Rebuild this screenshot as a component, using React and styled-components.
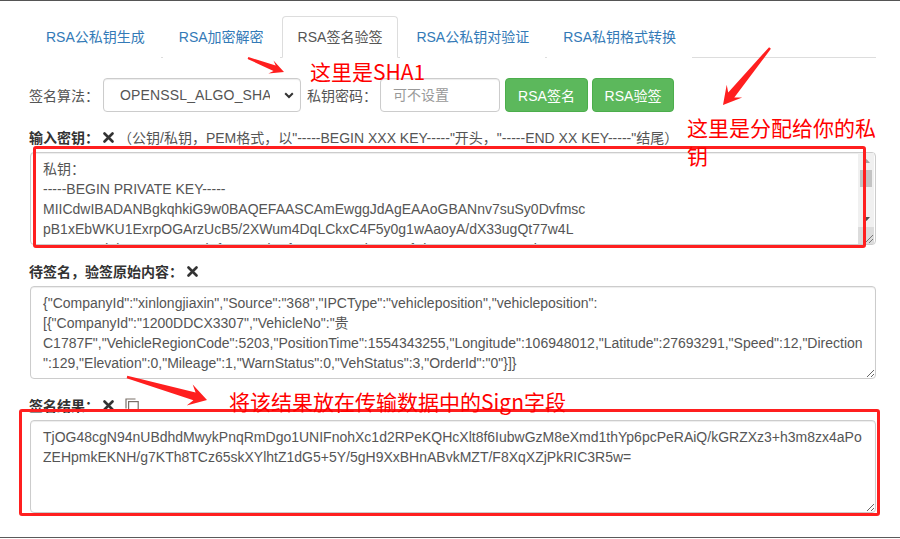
import React from "react";
import styled, { createGlobalStyle } from "styled-components";

const Global = createGlobalStyle`
  html, body { margin: 0; padding: 0; background: #fff; }
  body { font-family: "Liberation Sans", "Noto Sans CJK SC", Arial, sans-serif; font-size: 14px; color: #333; }
  * { box-sizing: border-box; }
`;

const Page = styled.div`
  position: relative;
  width: 900px;
  height: 538px;
  border-top: 1px solid #555;
  border-bottom: 1px solid #5a5a5a;
  overflow: hidden;
`;

const Container = styled.div`
  width: 846px;
  margin-left: 30px;
  padding-top: 15px;
`;

const Tabs = styled.ul`
  display: flex;
  list-style: none;
  margin: 0;
  padding: 0;
  border-bottom: 1px solid #ddd;
`;

const TabItem = styled.li`
  margin-bottom: -1px;
`;

const TabLink = styled.a`
  display: block;
  padding: 10px 15px;
  margin-right: 2px;
  line-height: 20px;
  font-size: 14px;
  text-decoration: none;
  border: 1px solid ${(p) => (p.$active ? "#ddd" : "transparent")};
  border-bottom-color: ${(p) => (p.$active ? "#fff" : "transparent")};
  border-radius: 4px 4px 0 0;
  background: #fff;
  color: ${(p) => (p.$active ? "#555" : "#337ab7")};
  cursor: pointer;
`;

const ToolRow = styled.div`
  display: flex;
  align-items: center;
  margin-top: 20px;
  margin-bottom: 15px;
  margin-left: -1px;
`;

const InlineLabel = styled.span`
  color: #555;
  font-size: 14px;
  margin-right: ${(p) => p.$mr || 4}px;
`;

const SelectBox = styled.div`
  display: flex;
  align-items: center;
  width: 198px;
  height: 34px;
  border: 1px solid #ccc;
  border-radius: 4px;
  padding: 0 6px 0 16px;
  margin-right: 6px;
  color: #555;
  font-size: 14px;
  box-shadow: inset 0 1px 1px rgba(0, 0, 0, 0.075);
`;

const SelectText = styled.span`
  flex: 1;
  overflow: hidden;
  white-space: nowrap;
  letter-spacing: 0.15px;
`;

const Chevron = styled.svg`
  flex: none;
  margin-left: 14px;
`;

const TextInput = styled.input`
  width: 120px;
  height: 34px;
  border: 1px solid #ccc;
  border-radius: 4px;
  padding: 6px 12px;
  margin-right: 5px;
  font-family: inherit;
  font-size: 14px;
  color: #555;
  box-shadow: inset 0 1px 1px rgba(0, 0, 0, 0.075);
  &::placeholder { color: #999; }
`;

const GreenButton = styled.button`
  width: ${(p) => p.$w}px;
  height: 34px;
  margin-right: 4px;
  border: 1px solid #4cae4c;
  border-radius: 4px;
  background: #5cb85c;
  color: #fff;
  font-family: inherit;
  font-size: 14px;
  padding: 0;
`;

const FormGroup = styled.div`
  margin-bottom: 16px;
`;

const FieldLabel = styled.div`
  display: flex;
  align-items: center;
  height: 20px;
  margin-bottom: 5px;
  margin-left: -1px;
  font-weight: bold;
  color: #333;
  font-size: 14px;
  white-space: nowrap;
`;

const Hint = styled.span`
  font-weight: normal;
  color: #555;
  margin-left: 4px;
`;

const IconX = styled.svg`
  margin-left: 4px;
  flex: none;
`;

const CopyIcon = styled.svg`
  margin-left: 11px;
  flex: none;
`;

const FieldWrap = styled.div`
  position: relative;
`;

const Area = styled.textarea`
  display: block;
  width: 100%;
  height: 93px;
  padding: 6px ${(p) => (p.$scroll ? 28 : 12)}px 6px 12px;
  border: 1px solid #ccc;
  border-radius: 4px;
  font-family: "Liberation Sans", "Noto Sans CJK SC", Arial, sans-serif;
  font-size: 14px;
  line-height: 20px;
  color: #555;
  white-space: pre;
  overflow: hidden;
  box-shadow: inset 0 1px 1px rgba(0, 0, 0, 0.075);
  resize: vertical;
  outline: none;
`;

/* drawn scrollbar that lies over the key textarea (headless hides native ones) */
const ScrollRail = styled.div`
  position: absolute;
  top: 1px;
  right: 2px;
  bottom: 1px;
  width: 16px;
  display: flex;
  flex-direction: column;
  pointer-events: none;
`;

const RailButton = styled.div`
  height: 16px;
  flex: none;
  display: flex;
  align-items: center;
  justify-content: center;
  background: #f0f0f0;
`;

const RailTrack = styled.div`
  flex: 1;
  background: #f0f0f0;
  padding: 1px 2px 0;
`;

const RailThumb = styled.div`
  height: 17px;
  background: #c3c3c3;
`;

const RailCorner = styled.div`
  height: 17px;
  flex: none;
  background: #dcdcdc;
  display: flex;
  align-items: flex-end;
  justify-content: flex-end;
`;

const RedBox = styled.div`
  position: absolute;
  top: ${(p) => p.$t}px;
  left: ${(p) => p.$l}px;
  right: ${(p) => p.$r}px;
  bottom: ${(p) => p.$b}px;
  border: 3px solid #ff1f1f;
  border-radius: 3px;
  pointer-events: none;
`;

const Note = styled.div`
  position: absolute;
  left: ${(p) => p.$x}px;
  top: ${(p) => p.$y}px;
  width: ${(p) => (p.$w ? p.$w + "px" : "auto")};
  white-space: ${(p) => (p.$w ? "normal" : "nowrap")};
  font-family: "Noto Sans CJK SC", "Liberation Sans", sans-serif;
  font-size: 21px;
  line-height: 28px;
  color: #ff0000;
  pointer-events: none;
`;

const ArrowLayer = styled.svg`
  position: absolute;
  left: 0;
  top: -1px;
  pointer-events: none;
`;

function arrowPoints(x1, y1, x2, y2, headLen, headW, shaftW, tailW) {
  const dx = x2 - x1;
  const dy = y2 - y1;
  const L = Math.sqrt(dx * dx + dy * dy);
  const ux = dx / L;
  const uy = dy / L;
  const px = -uy;
  const py = ux;
  const bx = x2 - ux * headLen;
  const by = y2 - uy * headLen;
  const nx = x2 - ux * headLen * 0.72;
  const ny = y2 - uy * headLen * 0.72;
  const pts = [
    [x1 + px * tailW, y1 + py * tailW],
    [nx + px * shaftW, ny + py * shaftW],
    [bx + px * headW, by + py * headW],
    [x2, y2],
    [bx - px * headW, by - py * headW],
    [nx - px * shaftW, ny - py * shaftW],
    [x1 - px * tailW, y1 - py * tailW],
  ];
  return pts.map((p) => p[0].toFixed(1) + "," + p[1].toFixed(1)).join(" ");
}

const Arrow = ({ a }) => (
  <polygon points={arrowPoints(a[0], a[1], a[2], a[3], a[4], a[5], a[6], a[7])} fill="#ff1f1f" />
);

const tabs = ["RSA公私钥生成", "RSA加密解密", "RSA签名验签", "RSA公私钥对验证", "RSA私钥格式转换"];

const keyText = [
  "私钥：",
  "-----BEGIN PRIVATE KEY-----",
  "MIICdwIBADANBgkqhkiG9w0BAQEFAASCAmEwggJdAgEAAoGBANnv7suSy0Dvfmsc",
  "pB1xEbWKU1ExrpOGArzUcB5/2XWum4DqLCkxC4F5y0g1wAaoyA/dX33ugQt77w4L",
  "cHAAAr0d3bQxVqQ8mZ1jTf5R0a+dK9fOEHq6w7YbQ2BPfSkLqP9Nx3u5mGoiWc1y",
  "vT8Wq0fE2RkA3aL7GdZxU5nP1bY4oX9tQmH6Kc2sJrV0eDgN8uIwMhA5zLpCf3TQ",
  "AgMBAAECgYEAqX2mK9vN4pL7rQw8sF1tY6hJ3dG0bC5eZ2uA9oI4kM7nR1xW3yT6",
  "fP0qH8sL2vD5gK9jN4mB1cX7zE3aR6wU0tY8iO2pQ5lS9hF4dG7kJ1bV3nM6xC0e",
  "ZkECQQD3rT5yU8iO1pL4kJ7hG2fD9sA6zX3cV0bN5mQ8wE1rT4yU7iO0pL3kJ6hG",
  "9fD2sA5zX8cV1bN4mQ7wE0rT3yU6iO9pAkEA4kJ7hG2fD9sA6zX3cV0bN5mQ8wE1",
  "rT4yU7iO0pL3kJ6hG9fD2sA5zX8cV1bN4mQ7wE0rT3yU6iO9pL2kJ5hG8fD1sA4z",
  "-----END PRIVATE KEY-----",
].join("\n");

const rawText = [
  '{"CompanyId":"xinlongjiaxin","Source":"368","IPCType":"vehicleposition","vehicleposition":',
  '[{"CompanyId":"1200DDCX3307","VehicleNo":"贵',
  'C1787F","VehicleRegionCode":5203,"PositionTime":1554343255,"Longitude":106948012,"Latitude":27693291,"Speed":12,"Direction',
  '":129,"Elevation":0,"Mileage":1,"WarnStatus":0,"VehStatus":3,"OrderId":"0"}]}',
].join("\n");

const signText = [
  "TjOG48cgN94nUBdhdMwykPnqRmDgo1UNIFnohXc1d2RPeKQHcXlt8f6IubwGzM8eXmd1thYp6pcPeRAiQ/kGRZXz3+h3m8zx4aPo",
  "ZEHpmkEKNH/g7KTh8TCz65skXYlhtZ1dG5+5Y/5gH9XxBHnABvkMZT/F8XqXZjPkRIC3R5w=",
].join("\n");

const XMark = () => (
  <IconX width="11" height="11" viewBox="0 0 11 11">
    <path d="M1.5 1.5 L9.5 9.5 M9.5 1.5 L1.5 9.5" stroke="#333" strokeWidth="2.6" strokeLinecap="round" />
  </IconX>
);

const Scrollbar = () => (
  <ScrollRail>
    <RailButton>
      <svg width="7" height="4" viewBox="0 0 7 4">
        <path d="M0 4 L3.5 0 L7 4 Z" fill="#a3a3a3" />
      </svg>
    </RailButton>
    <RailTrack>
      <RailThumb />
    </RailTrack>
    <RailButton>
      <svg width="7" height="4" viewBox="0 0 7 4">
        <path d="M0 0 L7 0 L3.5 4 Z" fill="#505050" />
      </svg>
    </RailButton>
    <RailCorner>
      <svg width="12" height="12" viewBox="0 0 12 12">
        <path d="M11 3 L3 11 M11 7 L7 11" stroke="#777" strokeWidth="1" />
      </svg>
    </RailCorner>
  </ScrollRail>
);

export default function App() {
  return (
    <>
      <Global />
      <Page>
        <Container>
          <Tabs>
            {tabs.map((t, i) => (
              <TabItem key={t}>
                <TabLink $active={i === 2}>{t}</TabLink>
              </TabItem>
            ))}
          </Tabs>

          <ToolRow>
            <InlineLabel $mr={4}>签名算法：</InlineLabel>
            <SelectBox>
              <SelectText>OPENSSL_ALGO_SHA1</SelectText>
              <Chevron width="10" height="7" viewBox="0 0 10 7">
                <path d="M1.2 1.3 L5 5 L8.8 1.3" fill="none" stroke="#333" strokeWidth="2" />
              </Chevron>
            </SelectBox>
            <InlineLabel $mr={3}>私钥密码：</InlineLabel>
            <TextInput placeholder="可不设置" />
            <GreenButton $w={83}>RSA签名</GreenButton>
            <GreenButton $w={82}>RSA验签</GreenButton>
          </ToolRow>

          <FormGroup>
            <FieldLabel>
              输入密钥：
              <XMark />
              <Hint>（公钥/私钥，PEM格式，以"-----BEGIN XXX KEY-----"开头，"-----END XX KEY-----"结尾）</Hint>
            </FieldLabel>
            <FieldWrap>
              <Area $scroll readOnly defaultValue={keyText} />
              <Scrollbar />
              <RedBox $t={-6} $l={3} $r={10} $b={-3} />
            </FieldWrap>
          </FormGroup>

          <FormGroup>
            <FieldLabel>
              待签名，验签原始内容：
              <XMark />
            </FieldLabel>
            <FieldWrap>
              <Area readOnly defaultValue={rawText} />
            </FieldWrap>
          </FormGroup>

          <FormGroup>
            <FieldLabel>
              签名结果：
              <XMark />
              <CopyIcon width="14" height="14" viewBox="0 0 14 14">
                <path d="M1 10.5 V1 H10.5" fill="none" stroke="#7a7068" strokeWidth="1.2" />
                <rect x="3.6" y="3.6" width="9.6" height="9.6" fill="none" stroke="#7a7068" strokeWidth="1.2" />
              </CopyIcon>
            </FieldLabel>
            <FieldWrap>
              <Area readOnly defaultValue={signText} />
              <RedBox $t={-11} $l={-11} $r={-4} $b={-3} />
            </FieldWrap>
          </FormGroup>
        </Container>

        <ArrowLayer width="900" height="539" viewBox="0 0 900 539">
          <Arrow a={[248, 58, 284, 72, 14, 7, 3, 1]} />
          <Arrow a={[770, 48, 723, 105, 18, 10, 4, 1.2]} />
          <Arrow a={[127, 377, 207, 400, 18, 11, 4, 1.2]} />
        </ArrowLayer>

        <Note $x={310} $y={56}>这里是SHA1</Note>
        <Note $x={687} $y={112} $w={193}>这里是分配给你的私钥</Note>
        <Note $x={229} $y={386}>将该结果放在传输数据中的Sign字段</Note>
      </Page>
    </>
  );
}
